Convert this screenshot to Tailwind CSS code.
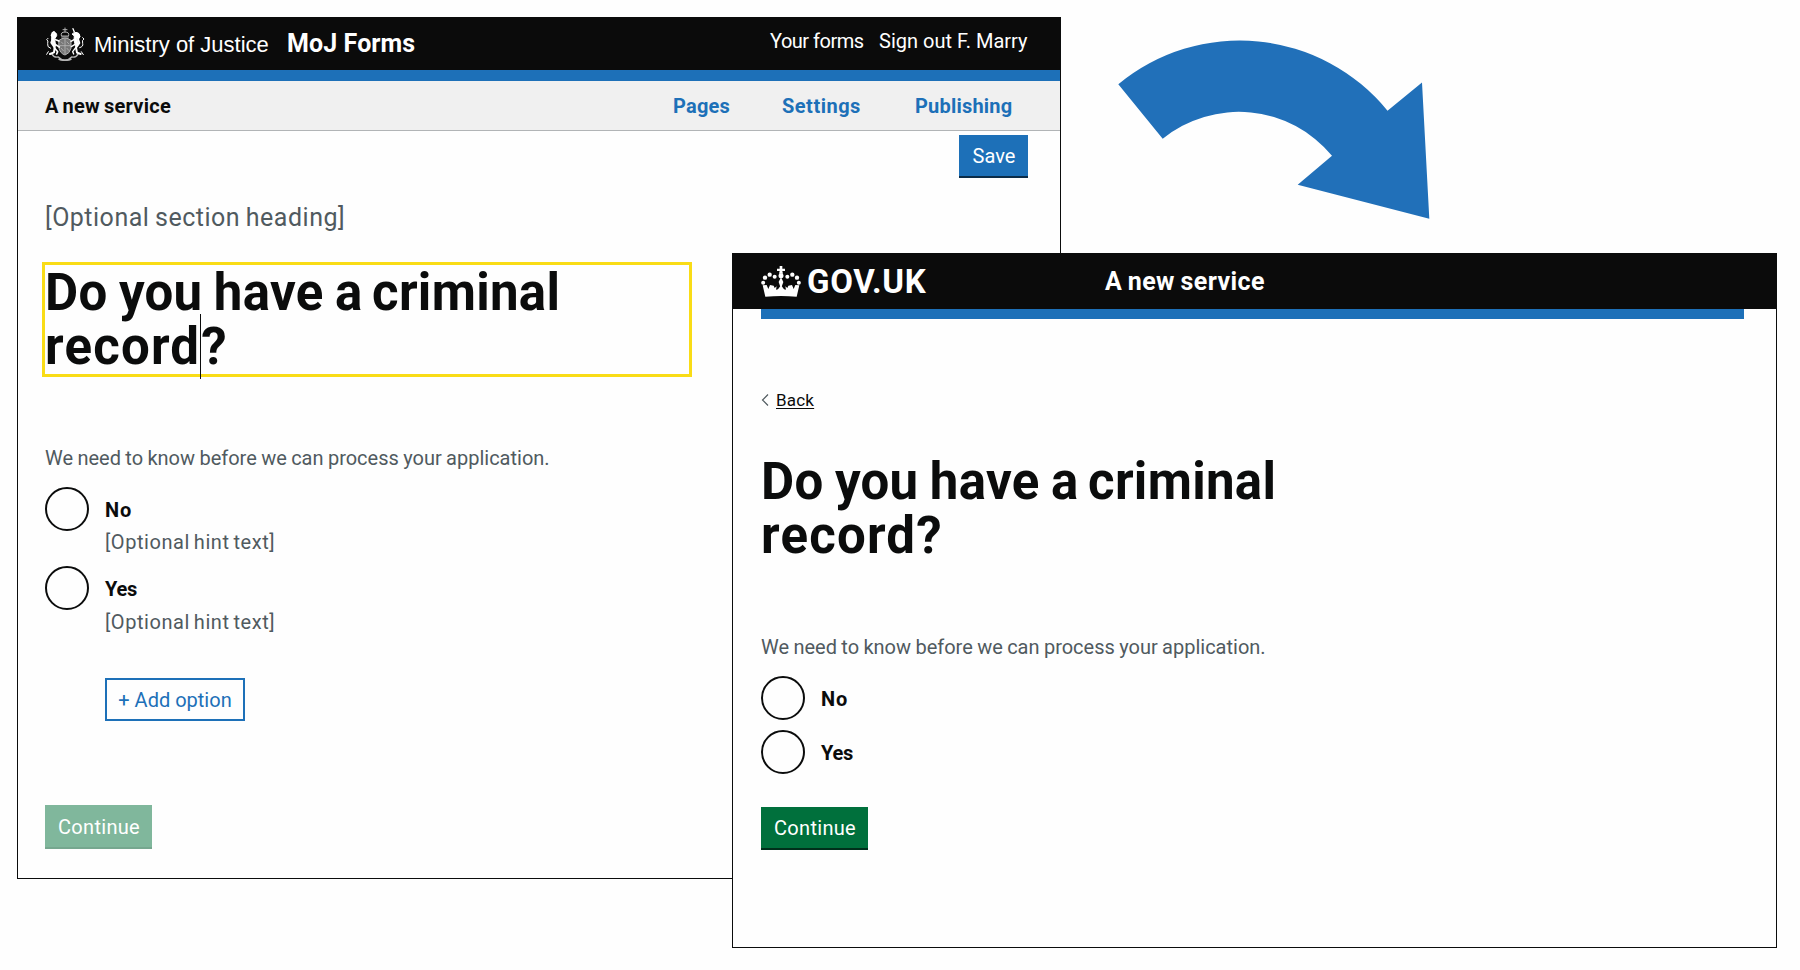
<!DOCTYPE html>
<html lang="en">
<head>
<meta charset="utf-8">
<title>MoJ Forms</title>
<script src="https://cdn.jsdelivr.net/npm/@tailwindcss/browser@4"></script>
</head>
<body class="relative w-[1800px] h-[970px] overflow-hidden bg-[#fefefe] font-[Roboto,sans-serif] text-[#0b0c0c]">

<!-- Editor window -->
<section class="absolute left-[17px] top-[17px] flex h-[862px] w-[1044px] flex-col border border-[#0b0c0c] bg-[#fefefe]">
  <header class="flex h-[52px] shrink-0 items-center bg-[#0b0b0b] pl-[27px] pr-8 text-white">
    <svg class="h-[34px] w-10 shrink-0" viewBox="0 0 120 102" fill="none" stroke-linecap="round" stroke-linejoin="round">
      <g stroke="#b4b4b4" stroke-width="3">
        <path d="M60 3v12M54 8h12M49 26q-3-11 11-11t11 11zM50 30h20"/>
        <path d="M42 40q18-14 36 0v24q-4 16-18 20-14-4-18-20z" fill="#777"/>
        <path d="M60 36v44M44 56h32M49 45l5 5M66 45l6 6M49 64l6 7M66 64l5 6" stroke-width="2.5"/>
        <path d="M20 80q7 13 20 10 8 9 20 9t20-9q13 3 20-10M42 97q18 7 36 0" stroke-width="4"/>
      </g>
      <g stroke="#fff" stroke-width="6">
        <path d="M27 15q-6 2-7 10l4 8-5 14 10 14-2 15-12 5" />
        <path d="M26 16q10 0 9 10l-6 10 3 22-10-8-2-16z" fill="#fff" stroke-width="3"/>
        <path d="M32 38l10 4M31 52l12 8M28 62l10 12-3 7" stroke-width="5"/>
        <path d="M17 64Q5 60 8 50t-3-12l4-4M10 74l-5 8" stroke-width="3"/>
        <path d="M94 18q8 2 9 10l-4 8 4 12-10 14 3 15 11 4"/>
        <path d="M90 16l12 5 3 9-10 5 6 16-9 8-5-20 1-12-6-5z" fill="#fff" stroke-width="3"/>
        <path d="M87 38l-9 5M90 52l-11 7M92 62l-9 12 3 7M88 15l-4-10" stroke-width="4"/>
        <path d="M104 62q12-3 9-13t4-13l-4-4M109 74l6 9" stroke-width="3"/>
      </g>
    </svg>
    <span class="ml-[9px] w-[193px] whitespace-nowrap font-['Liberation_Sans',sans-serif] text-[22px]">Ministry of Justice</span>
    <span class="whitespace-nowrap text-[25px] font-bold tracking-[0.1px]">MoJ Forms</span>
    <nav class="-mt-1.5 ml-auto flex whitespace-nowrap text-xl">
      <a class="w-[109px] tracking-[-0.5px]">Your forms</a>
      <a class="w-[149px]">Sign out F. Marry</a>
    </nav>
  </header>
  <div class="h-[11px] shrink-0 bg-[#1d70b8]"></div>
  <div class="flex h-[50px] shrink-0 items-center border-b border-[#b1b4b6] bg-[#f0f0f0] pl-[27px] pr-[31px] pt-px text-xl font-bold tracking-[0.5px]">
    <span class="tracking-[0.3px] [word-spacing:-1.5px]">A new service</span>
    <nav class="ml-auto flex text-[#1d70b8]">
      <a class="w-[109px] tracking-[0.2px]">Pages</a>
      <a class="w-[133px]">Settings</a>
      <a class="w-[114px] tracking-[0.2px]">Publishing</a>
    </nav>
  </div>
  <main class="flex flex-col items-start pl-[27px] pr-8">
    <button class="mt-1 flex h-[43px] w-[69px] items-center justify-center self-end border-b-2 border-[#0b2c48] bg-[#1d70b8] pl-px pt-px text-xl text-white">Save</button>
    <p class="mt-[25px] text-[25px] leading-[30px] tracking-[0.5px] text-[#505a5f] [word-spacing:-1px]">[Optional section heading]</p>
    <h1 class="-ml-[3px] mt-[29px] h-[115px] w-[650px] border-3 border-[#f9dc16] pt-px text-[51px] font-bold leading-[54px]"><span class="tracking-[0.3px] [word-spacing:-1.6px]">Do you have a</span><span class="tracking-[0.3px] [word-spacing:-3.5px]"> criminal</span><br><span class="tracking-[1.2px]">record</span><span class="relative"><i class="absolute left-0 top-[-3px] h-[65px] w-px bg-[#0b0c0c]"></i></span><span class="ml-px">?</span></h1>
    <p class="mt-[68px] text-xl leading-[26px] text-[#505a5f] [word-spacing:-0.6px]">We need to know before we can process your application.</p>
    <label class="mt-4 flex h-11 items-center gap-4 text-xl font-bold"><i class="size-11 rounded-full border-2 border-[#0b0c0c]"></i><span class="pt-0.5 tracking-[0.8px]">No</span></label>
    <p class="-mt-px ml-[60px] text-xl leading-6 tracking-[0.55px] text-[#505a5f] [word-spacing:-1.5px]">[Optional hint text]</p>
    <label class="mt-3 flex h-11 items-center gap-4 text-xl font-bold"><i class="size-11 rounded-full border-2 border-[#0b0c0c]"></i><span class="pt-0.5 tracking-[-0.3px]">Yes</span></label>
    <p class="ml-[60px] text-xl leading-6 tracking-[0.55px] text-[#505a5f] [word-spacing:-1.5px]">[Optional hint text]</p>
    <button class="ml-[60px] mt-11 flex h-[43px] w-[140px] items-center justify-center border-2 border-[#1d70b8] pt-px text-xl text-[#1d70b8]">+ Add option</button>
    <button class="mt-[84px] flex h-11 w-[107px] items-center justify-center border-b-2 border-[#76a78f] bg-[#80b79c] pl-px pt-0.5 text-xl tracking-[0.3px] text-white">Continue</button>
  </main>
</section>

<!-- Arrow from the editor to the published page -->
<svg class="absolute left-[1110px] top-[30px] h-[200px] w-[330px]" viewBox="1110 30 330 200">
  <path fill="#2170b9" d="M1118.3 84.3A190.5 190.5 0 0 1 1387.5 110.7L1422 82.5 1429.3 218.8 1297.7 184.8 1332 155.8A121 121 0 0 0 1162.7 138.7Z"/>
</svg>

<!-- Published page window -->
<section class="absolute left-[732px] top-[253px] flex h-[695px] w-[1045px] flex-col border border-[#0b0c0c] bg-[#fefefe]">
  <header class="flex h-[55px] shrink-0 items-center bg-[#0b0b0b] pl-7 text-white">
    <svg class="h-[31px] w-10 shrink-0" viewBox="0 0 120 93" fill="#fff">
      <path d="M56 0h8v8h8v7h-8l2 8H54l2-8h-8V8h8z"/>
      <circle cx="60" cy="29" r="7.5"/><path d="M60 34l7 14-5 14h-4l-5-14z"/>
      <circle cx="41" cy="32" r="6"/><circle cx="26" cy="26" r="6.5"/><circle cx="12" cy="35" r="6.5"/><circle cx="6.5" cy="50" r="6"/>
      <circle cx="79" cy="32" r="6"/><circle cx="94" cy="26" r="6.5"/><circle cx="108" cy="35" r="6.5"/><circle cx="113.5" cy="50" r="6"/>
      <path d="M5 58l12-1 5 12 5-12 11 2 3 7 6-5-2 10 6-1 9-12 9 12 6 1-2-10 6 5 3-7 11-2 5 12 5-12 12 1-8 34q-46-4-94 0z"/>
    </svg>
    <span class="ml-1.5 w-[298px] text-[33px] font-bold tracking-[0.7px]">GOV.UK</span>
    <span class="text-[25px] font-bold tracking-[0.4px] [word-spacing:-1px]">A new service</span>
  </header>
  <div class="ml-7 h-2.5 w-[983px] shrink-0 bg-[#1d70b8]"></div>
  <main class="flex flex-col items-start pl-7">
    <a class="mt-[71px] flex items-center gap-[7px] text-[17px] leading-5">
      <svg class="h-3 w-2" viewBox="0 0 8 12" fill="none" stroke="#505a5f" stroke-width="1.2"><path d="M7 .5L1.5 6 7 11.5"/></svg>
      <span class="tracking-[0.2px] underline underline-offset-2 decoration-1">Back</span>
    </a>
    <h1 class="mt-[45px] text-[51px] font-bold leading-[54px]"><span class="tracking-[0.3px] [word-spacing:-1.6px]">Do you have a</span><span class="tracking-[0.3px] [word-spacing:-3.5px]"> criminal</span><br><span class="tracking-[1.2px]">record?</span></h1>
    <p class="mt-[71px] text-xl leading-[26px] text-[#505a5f] [word-spacing:-0.6px]">We need to know before we can process your application.</p>
    <label class="mt-4 flex h-11 items-center gap-4 text-xl font-bold"><i class="size-11 rounded-full border-2 border-[#0b0c0c]"></i><span class="pt-0.5 tracking-[0.8px]">No</span></label>
    <label class="mt-2.5 flex h-11 items-center gap-4 text-xl font-bold"><i class="size-11 rounded-full border-2 border-[#0b0c0c]"></i><span class="pt-0.5 tracking-[-0.3px]">Yes</span></label>
    <button class="mt-[33px] flex h-[43px] w-[107px] items-center justify-center border-b-2 border-[#00301b] bg-[#00703c] pl-px pt-px text-xl tracking-[0.3px] text-white">Continue</button>
  </main>
</section>
</body>
</html>
